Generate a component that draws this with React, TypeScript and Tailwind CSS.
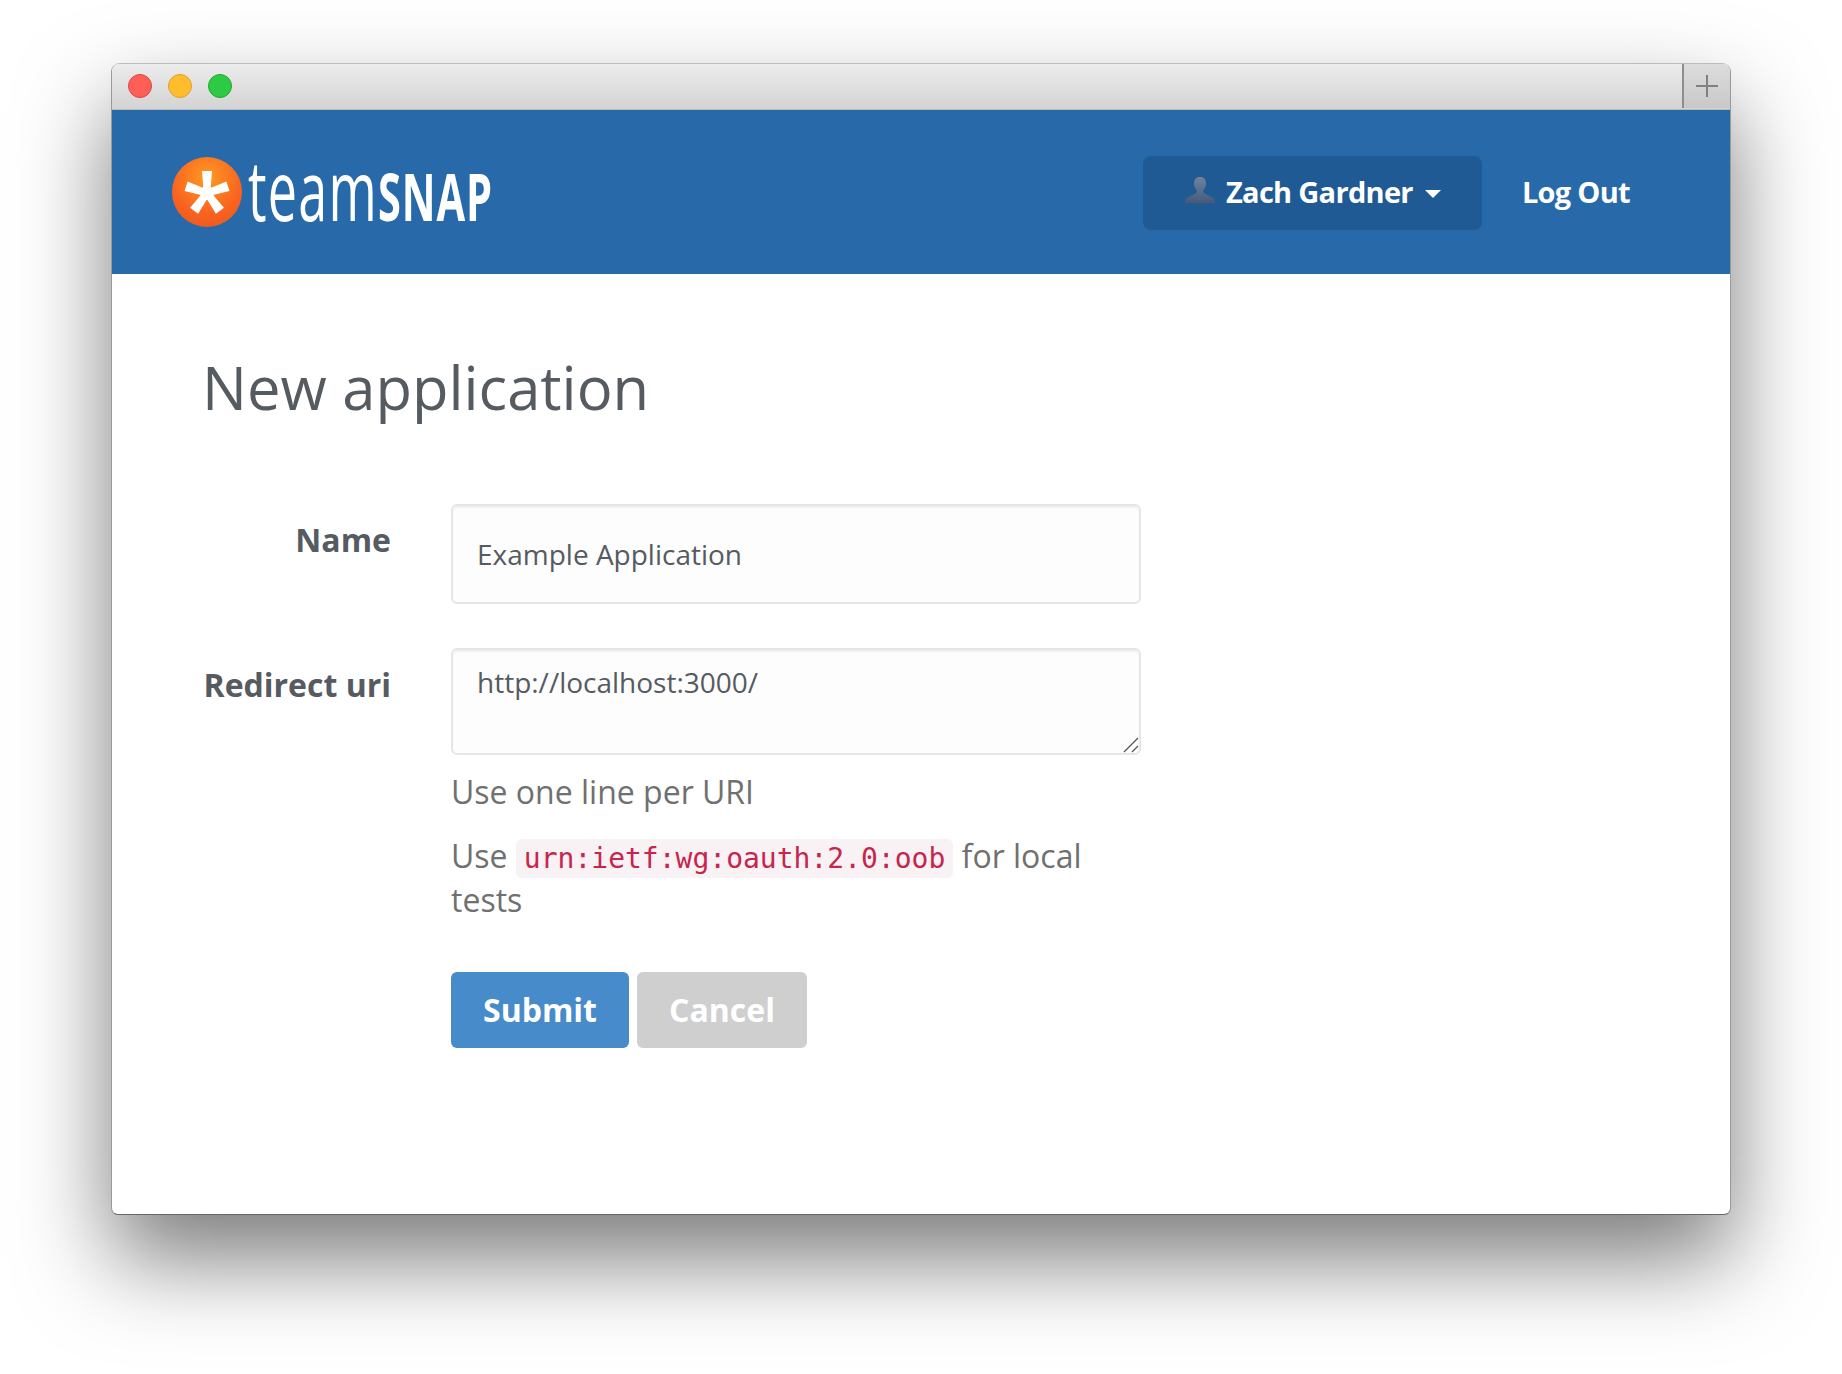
export default function App() {
  return (
    <div className="h-[1374px] w-[1842px] overflow-hidden bg-white pt-[63px] pl-[111px] font-['Open_Sans',sans-serif]">
      <div className="flex h-[1152px] w-[1620px] flex-col overflow-hidden rounded-t-[9px] rounded-b-[7px] border-x border-b border-x-[#9a9a9a] border-b-[#666] bg-white shadow-[0_44px_92px_0_rgba(0,0,0,0.52)]">
        <div className="flex h-[47px] shrink-0 items-center justify-between border-t border-b border-t-[#bcbcbc] border-b-[#b9b9b9] bg-gradient-to-b from-[#ececec] to-[#d3d3d3]">
          <div className="mb-[2px] flex gap-4 pl-[16px]">
            <span className="h-6 w-6 rounded-full border border-[#e0443e] bg-[#ff5f57]" />
            <span className="h-6 w-6 rounded-full border border-[#dea123] bg-[#ffbd2e]" />
            <span className="h-6 w-6 rounded-full border border-[#1aab29] bg-[#2fca45]" />
          </div>
          <div className="mb-[2px] flex h-[44px] w-[48px] items-center justify-center border-l-2 border-[#8e8e8e] bg-gradient-to-b from-[#dddddd] to-[#c8c8c8] text-[#808080]">
            <svg width="24" height="24" viewBox="0 0 24 24" fill="none" stroke="#808080" strokeWidth="2"><path d="M12 1v22M1 12h22" /></svg>
          </div>
        </div>
        <header className="flex h-[164px] shrink-0 items-center justify-between bg-[#286aa9] pl-[60px] pr-[100px]">
          <div className="flex items-center">
            <svg width="70" height="70" viewBox="0 0 70 70" className="shrink-0">
              <defs>
                <radialGradient id="orb" cx="50%" cy="30%" r="70%">
                  <stop offset="0" stopColor="#ff9a22" />
                  <stop offset="0.7" stopColor="#f9651f" />
                  <stop offset="1" stopColor="#f05a20" />
                </radialGradient>
              </defs>
              <circle cx="35" cy="35" r="35" fill="url(#orb)" />
              <g fill="#fff">
                <polygon points="30,14 40,14 38.5,33 31.5,33" />
                <polygon points="30,14 40,14 38.5,33 31.5,33" transform="rotate(72 35 36)" />
                <polygon points="30,14 40,14 38.5,33 31.5,33" transform="rotate(144 35 36)" />
                <polygon points="30,14 40,14 38.5,33 31.5,33" transform="rotate(216 35 36)" />
                <polygon points="30,14 40,14 38.5,33 31.5,33" transform="rotate(288 35 36)" />
                <circle cx="35" cy="36" r="7" />
              </g>
            </svg>
            <div className="ml-[6px] mt-[-6px] flex h-[70px] w-[400px] origin-left scale-x-[0.62] items-baseline whitespace-nowrap leading-[70px] text-white">
              <span className="text-[84px] font-normal tracking-[2px]">team</span>
              <span className="text-[67px] font-bold tracking-[1.5px]">SNAP</span>
            </div>
          </div>
          <nav className="flex items-center">
            <button className="mt-[1px] flex h-[74px] w-[339px] items-center justify-center rounded-[8px] bg-[#1f5a94] pb-[1px] text-[29px] font-bold tracking-[-0.7px] text-white">
              <svg width="32" height="29" viewBox="0 0 32 32" className="mb-[4px] mr-[10px] shrink-0" preserveAspectRatio="none">
                <defs>
                  <linearGradient id="person" x1="0" y1="0" x2="0" y2="1">
                    <stop offset="0" stopColor="#6b84a3" />
                    <stop offset="1" stopColor="#465a78" />
                  </linearGradient>
                </defs>
                <path d="M16 1c-4 0-6 3-6 7 0 3 1 6 3 8 0 2-1 3-4 5-4 2-8 3-8 9h30c0-6-4-7-8-9-3-2-4-3-4-5 2-2 3-5 3-8 0-4-2-7-6-7z" fill="url(#person)" />
              </svg>
              <span>Zach Gardner</span>
              <span className="ml-[12px] mt-[3px] h-0 w-0 border-x-[8px] border-t-[8px] border-x-transparent border-t-white" />
            </button>
            <a className="ml-[40px] text-[29px] font-bold tracking-[-0.7px] text-white">Log Out</a>
          </nav>
        </header>
        <main className="flex-1 pl-[90px] pt-[75px] text-[#555b61]">
          <h1 className="text-[59.7px] font-normal leading-[76px]">New application</h1>
          <form className="mt-[79px] flex flex-col">
            <div className="flex">
              <label className="w-[189px] pt-[14px] text-right text-[32px] font-bold leading-[44px]">Name</label>
              <input
                defaultValue="Example Application"
                className="ml-[60px] h-[100px] w-[690px] rounded-[6px] border-2 border-[#e6e6e6] bg-[#fdfdfd] px-6 text-[28px] text-[#555b61] shadow-[inset_0_2px_2px_rgba(0,0,0,0.06)] outline-none"
              />
            </div>
            <div className="mt-[44px] flex">
              <label className="w-[189px] whitespace-nowrap pt-[15px] text-right text-[32px] font-bold leading-[44px]">Redirect uri</label>
              <div className="ml-[60px] w-[690px]">
                <div className="relative">
                  <textarea
                    defaultValue="http://localhost:3000/"
                    className="block h-[107px] w-[690px] resize-none rounded-[6px] border-2 border-[#e6e6e6] bg-[#fdfdfd] px-6 pt-[12px] text-[28px] leading-[40px] text-[#555b61] shadow-[inset_0_2px_2px_rgba(0,0,0,0.06)] outline-none"
                  />
                  <svg width="16" height="16" viewBox="0 0 16 16" className="absolute bottom-[2px] right-[2px]" fill="none" stroke="#555" strokeWidth="1.3">
                    <path d="M1 15L15 1M9 15L15 9" />
                  </svg>
                </div>
                <p className="mt-[15px] text-[32px] leading-[44px] text-[#707070]">Use one line per URI</p>
                <p className="mt-[20px] text-[32px] leading-[44px] text-[#707070]">
                  Use{" "}
                  <code className="rounded-[6px] bg-[#f8f2f5] px-2 py-[3px] font-['DejaVu_Sans_Mono',monospace] text-[28px] leading-none text-[#c7254e]">urn:ietf:wg:oauth:2.0:oob</code>{" "}
                  for local tests
                </p>
                <div className="mt-[50px] flex gap-2">
                  <button type="button" className="h-[76px] w-[178px] rounded-[6px] bg-[#478bca] text-[32px] font-bold text-white">Submit</button>
                  <button type="button" className="h-[76px] w-[170px] rounded-[6px] bg-[#cfcfcf] text-[32px] font-bold text-white">Cancel</button>
                </div>
              </div>
            </div>
          </form>
        </main>
      </div>
    </div>
  );
}
